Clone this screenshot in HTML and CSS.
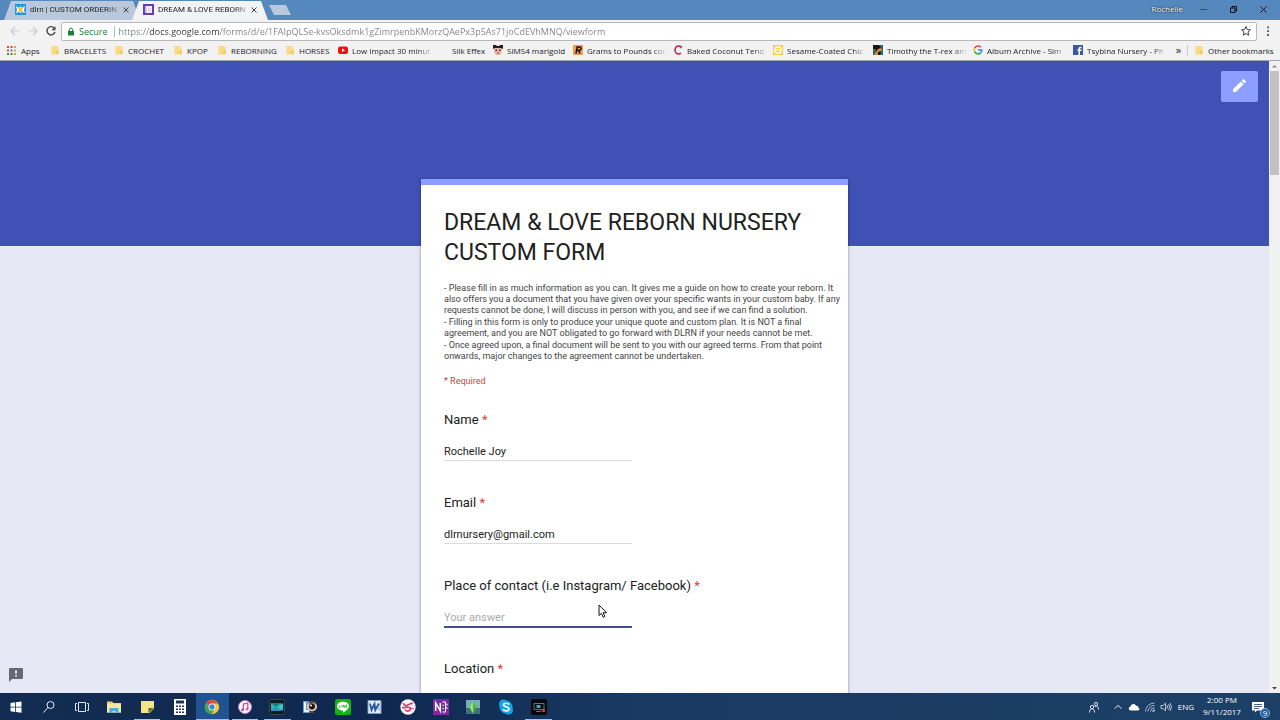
FILE: index.html
```html
<!DOCTYPE html>
<html lang="en">
<head>
  <meta charset="UTF-8">
  <meta name="viewport" content="width=device-width, initial-scale=1.0">
  <title>DREAM &amp; LOVE REBORN NURSERY CUSTOM FORM</title>
  <link rel="stylesheet" href="styles.css">
</head>
<body>

  <!-- shared icons -->
  <svg width="0" height="0" class="defs">
    <symbol id="folder" viewBox="0 0 10 11">
      <path d="M1 1h6l1 1h1v8H1z" fill="#fbdc84"/>
      <path d="M7 6h2v4H6z" fill="#f3c95c"/>
      <path d="M1 9.5h8v.8H1z" fill="#eec25a"/>
    </symbol>
    <symbol id="close" viewBox="0 0 8 8">
      <path d="M1.500 1.500l5 5m0-5l-5 5" stroke="#444"/>
    </symbol>
  </svg>

  <header class="tabstrip">
    <div class="tab">
      <svg class="fav" viewBox="0 0 11 11"><path d="M0 0h11v11H0z" fill="#1d9bd8"/><path d="M1 2l3 2 1.500-2L7 4l3-2-1 4 1 3-3-1-1.500 1L4 8 1 9l1-3z" fill="#fff"/><path d="M3 4l2.500-1L8 4 7 6l1 2H3l1-2z" fill="#f5c542"/></svg>
      <span class="tab-title">dlrn | CUSTOM ORDERIN</span>
      <button class="tab-close" aria-label="Close tab"><svg viewBox="0 0 8 8"><use href="#close"/></svg></button>
    </div>
    <div class="tab active">
      <svg class="fav" viewBox="0 0 11 11"><path d="M0 0h11v11H0z" fill="#673ab7"/><path d="M2 2h7v7H2z" fill="#f4effa"/><path d="M2 2h2v7H2zM5 4h3v1H5zm0 2h3v1H5z" fill="#d3c4ea"/></svg>
      <span class="tab-title">DREAM &amp; LOVE REBORN</span>
      <button class="tab-close" aria-label="Close tab"><svg viewBox="0 0 8 8"><use href="#close"/></svg></button>
    </div>
    <button class="new-tab" aria-label="New tab"></button>
    <div class="window-controls">
      <span class="user">Rochelle</span>
      <button aria-label="Minimize"><svg viewBox="0 0 9 9"><path d="M1 4.500h7" stroke="#2c4f78"/></svg></button>
      <button aria-label="Restore"><svg viewBox="0 0 9 9"><path d="M1.500 3h4.500v4.500H1.500zM3 3V1.500h4.500V6H6" fill="none" stroke="#111"/></svg></button>
      <button aria-label="Close"><svg viewBox="0 0 9 9"><path d="M1.500 1.500l6 6m0-6l-6 6" stroke="#111"/></svg></button>
    </div>
  </header>

  <div class="toolbar">
    <button aria-label="Back"><svg viewBox="0 0 12 12"><path d="M10.500 6H2m4-4L2 6l4 4" fill="none" stroke="#cdcdcd" stroke-width="1.200"/></svg></button>
    <button aria-label="Forward"><svg viewBox="0 0 12 12"><path d="M1.500 6H10M6 2l4 4-4 4" fill="none" stroke="#cdcdcd" stroke-width="1.200"/></svg></button>
    <button aria-label="Reload"><svg viewBox="0 0 12 12"><path d="M9.300 3.200A4.100 4.100 0 1 0 10 7" fill="none" stroke="#444" stroke-width="1.400"/><path d="M10.500 1.200v4H6.500z" fill="#444"/></svg></button>
    <div class="omnibox">
      <svg class="lock" viewBox="0 0 8 9"><path d="M1 4h6v4.500H1z" fill="#188038"/><path d="M2.300 4V2.800a1.700 1.700 0 0 1 3.400 0V4" fill="none" stroke="#188038"/></svg>
      <span class="secure">Secure</span>
      <input class="url" type="text" aria-label="Address" value="https://docs.google.com/forms/d/e/1FAIpQLSe-kvsOksdmk1gZimrpenbKMorzQAePx3p5As71joCdEVhMNQ/viewform">
      <button aria-label="Bookmark this page"><svg viewBox="0 0 12 12"><path d="M6 1.500l1.300 3 3.200.3L8 7l.8 3.200L6 8.500l-2.800 1.700L4 7 1.500 4.800l3.200-.3z" fill="none" stroke="#444"/></svg></button>
    </div>
    <button class="menu" aria-label="Menu"><svg viewBox="0 0 12 12"><path d="M5.200 1.500h1.800v1.800H5.200zm0 3.800h1.800v1.800H5.200zm0 3.800h1.800v1.800H5.200z" fill="#555"/></svg></button>
  </div>

  <nav class="bookmarks">
    <a href="#"><svg viewBox="0 0 10 10"><path d="M0 1h2v2H0zm0 3.500h2v2H0z" fill="#d9483b"/><path d="M3.500 1h2v2h-2z" fill="#d9483b"/><path d="M7 1h2v2H7zm0 3.500h2v2H7z" fill="#e2a33a"/><path d="M3.500 4.500h2v2h-2z" fill="#3b78c4"/><path d="M0 8h2v2H0zm3.500 0h2v2h-2z" fill="#3a9153"/><path d="M7 8h2v2H7z" fill="#d8a428"/></svg><span>Apps</span></a>
    <a href="#"><svg viewBox="0 0 10 11"><use href="#folder"/></svg><span>BRACELETS</span></a>
    <a href="#"><svg viewBox="0 0 10 11"><use href="#folder"/></svg><span>CROCHET</span></a>
    <a href="#"><svg viewBox="0 0 10 11"><use href="#folder"/></svg><span>KPOP</span></a>
    <a href="#"><svg viewBox="0 0 10 11"><use href="#folder"/></svg><span>REBORNING</span></a>
    <a href="#"><svg viewBox="0 0 10 11"><use href="#folder"/></svg><span>HORSES</span></a>
    <a href="#" class="cut"><svg viewBox="0 0 10 10"><rect y="1.500" width="10" height="7.500" rx="2" fill="#e11"/><path d="M4 3.500l3 1.700-3 1.700z" fill="#fff"/></svg><span>Low Impact 30 minut</span></a>
    <a href="#"><svg viewBox="0 0 10 10"></svg><span>Silk Effex</span></a>
    <a href="#"><svg viewBox="0 0 10 10"><path d="M1 3h8v4L7 10H3L1 7z" fill="#e8b9a4"/><path d="M0 0h3l1 1h2l1-1h3v4L8 3H2L0 4z" fill="#2a1b1b"/><path d="M2.500 4.500H4V6H2.500zm3.500 0h1.500V6H6z" fill="#442d2d"/><path d="M4 7.500h2v1H4z" fill="#b33"/></svg><span>SIMS4 marigold</span></a>
    <a href="#" class="cut"><svg viewBox="0 0 10 10"><path d="M0 0h10v10H0z" fill="#f0a04b"/><path d="M3.500 2h3a1.500 1.500 0 0 1 0 3.200H3.800M4.200 2L3 8.500M5.500 5.200L7 8.500" fill="none" stroke="#111" stroke-width="1.500"/></svg><span>Grams to Pounds con</span></a>
    <a href="#" class="cut"><svg viewBox="0 0 10 10"><path d="M8 3.300V1.500L7 1.200C4 .3 2 2 2 5s2 5 6 3.200" fill="none" stroke="#c2213c" stroke-width="1.500"/></svg><span>Baked Coconut Tend</span></a>
    <a href="#" class="cut"><svg viewBox="0 0 10 10"><path d="M0 0h10v10H0z" fill="#f5d33f"/><circle cx="5" cy="5" r="3.200" fill="none" stroke="#fff" stroke-width="1.400"/><path d="M3.500 5h3.500" stroke="#fff"/></svg><span>Sesame-Coated Chic</span></a>
    <a href="#" class="cut"><svg viewBox="0 0 10 10"><path d="M0 0h10v10H0z" fill="#246a78"/><path d="M1 4l3-2 4 1 1 3-2 1-1 3H1l2-3z" fill="#d98e2b"/><path d="M0 0h6l2 3-3 1-2 3-1-3H0zM5 7l3-1-1 4H5z" fill="#20150e"/></svg><span>Timothy the T-rex am</span></a>
    <a href="#" class="cut"><svg viewBox="0 0 10 10"><g fill="none" stroke-width="1.600"><path d="M8 2.300A3.800 3.800 0 0 0 1.600 3.300" stroke="#ea4335"/><path d="M1.600 3.300a3.800 3.800 0 0 0 0 3.400" stroke="#fbbc05"/><path d="M1.600 6.700A3.800 3.800 0 0 0 7.600 7.800" stroke="#34a853"/><path d="M7.600 7.800A3.700 3.700 0 0 0 8.800 5H5" stroke="#4285f4"/></g></svg><span>Album Archive - Sim</span></a>
    <a href="#" class="cut"><svg viewBox="0 0 10 10"><path d="M0 0h10v10H0z" fill="#3b5998"/><path d="M8.500 2.500H7.300c-.8 0-1.100.4-1.100 1.200V10M4.500 5.300h4" fill="none" stroke="#fff" stroke-width="1.500"/></svg><span>Tsybina Nursery - Ph</span></a>
    <button aria-label="More bookmarks">»</button>
    <a href="#" class="other"><svg viewBox="0 0 10 11"><use href="#folder"/></svg><span>Other bookmarks</span></a>
  </nav>

  <div class="viewport">
    <main class="page">
      <button class="edit" aria-label="Edit this form"><svg viewBox="0 0 16 16"><path d="M2 14v-2.800L9.800 3.400l2.800 2.800L4.800 14zM10.600 2.600l1.200-1.200c.4-.4.900-.4 1.200 0l1.600 1.600c.4.400.4.900 0 1.200l-1.200 1.200z" fill="#fff"/></svg></button>
      <form class="card">
        <h1>DREAM &amp; LOVE REBORN NURSERY CUSTOM FORM</h1>
        <div class="intro">
          <p>- Please fill in as much information as you can. It gives me a guide on how to create your reborn. It<br>also offers you a document that you have given over your specific wants in your custom baby. If any<br>requests cannot be done, I will discuss in person with you, and see if we can find a solution.</p>
          <p>- Filling in this form is only to produce your unique quote and custom plan. It is NOT a final<br>agreement, and you are NOT obligated to go forward with DLRN if your needs cannot be met.</p>
          <p>- Once agreed upon, a final document will be sent to you with our agreed terms. From that point<br>onwards, major changes to the agreement cannot be undertaken.</p>
        </div>
        <p class="required">* Required</p>
        <div class="question">
          <label for="name">Name <b>*</b></label>
          <input id="name" type="text" value="Rochelle Joy">
        </div>
        <div class="question">
          <label for="email">Email <b>*</b></label>
          <input id="email" type="text" value="dlrnursery@gmail.com">
        </div>
        <div class="question focused">
          <label for="contact">Place of contact (i.e Instagram/ Facebook) <b>*</b></label>
          <input id="contact" type="text" placeholder="Your answer">
        </div>
        <div class="question">
          <label for="location">Location <b>*</b></label>
          <input id="location" type="text">
        </div>
      </form>
      <button class="report" aria-label="Report a problem"><svg viewBox="0 0 14 14"><path d="M1 0h12q1 0 1 1v9q0 1-1 1H3l-3 3V1q0-1 1-1z" fill="#666872"/><path d="M6.200 2.500h1.600v3.300H6.200zm0 4.500h1.600v1.600H6.200z" fill="#fff"/></svg></button>
    </main>
    <div class="scrollbar">
      <svg viewBox="0 0 11 10"><path d="M3 6.500L5.500 4 8 6.500z" fill="#8a8a8a"/></svg>
      <div class="thumb"></div>
      <svg class="down" viewBox="0 0 11 10"><path d="M3 4l2.500 2.500L8 4z" fill="#444"/></svg>
    </div>
  </div>

  <svg class="cursor" viewBox="0 0 10 15"><path d="M1 1v10.500l2.400-2.200 1.800 4 1.700-.8-1.700-3.800H8.500z" fill="#fff" stroke="#111"/></svg>

  <footer class="taskbar">
    <div class="apps">
      <button aria-label="Start"><svg viewBox="0 0 16 16"><path d="M2.500 4l4.700-.7v4.400H2.500zM8 3.200l5.500-.8v5.300H8zM2.500 8.500h4.700v4.400l-4.700-.7zM8 8.500h5.500v5.300L8 13z" fill="#fff"/></svg></button>
      <button aria-label="Search"><svg viewBox="0 0 16 16"><circle cx="9.500" cy="6" r="3.500" fill="none" stroke="#e8edf4"/><path d="M7 8.500l-4.500 5" stroke="#e8edf4"/></svg></button>
      <button aria-label="Task view"><svg viewBox="0 0 16 16"><path d="M4.500 3.500h7v9h-7zM3 4.500H1.500v7H3m10-7h1.500v7H13" fill="none" stroke="#dfe6f0"/></svg></button>
      <button aria-label="File Explorer"><svg viewBox="0 0 16 16"><path d="M1 2.500h5L7.500 4H15v9.500H1z" fill="#f0d173"/><path d="M1 5h14v8.500H1z" fill="#fbe69c"/><path d="M3.500 9h9v5h-3v-2h-3v2h-3z" fill="#46aee0"/></svg></button>
      <button class="open" aria-label="Sticky Notes"><svg viewBox="0 0 16 16"><path d="M2 2h13v7.500L10.500 14H2z" fill="#f5e589"/><path d="M9.500 14V9H15z" fill="#6c6534"/></svg></button>
      <button aria-label="Calculator"><svg viewBox="0 0 16 16"><path d="M2 0h12v16H2z" fill="#fff"/><path d="M4 1.500h8v3H4zM4 6.500h2v1.500H4zm3 0h2v1.500H7zm3 0h2v1.500h-2zM4 9.500h2V11H4zm3 0h2V11H7zm3 0h2V11h-2zM4 12.500h2V14H4zm3 0h2V14H7zm3 0h2V14h-2z" fill="#1b3258"/></svg></button>
      <button class="open current" aria-label="Chrome"><svg viewBox="0 0 16 16"><circle cx="8" cy="8" r="7.200" fill="#f6c832"/><path d="M8 8L1.800 4.400A7.200 7.200 0 0 1 14.200 4.500H8z" fill="#dd4b3e"/><path d="M1.800 4.400A7.200 7.200 0 0 0 7.500 15.200L11 9.800 8 8z" fill="#3ba55a"/><circle cx="8" cy="8" r="3.500" fill="#fff"/><circle cx="8" cy="8" r="2.700" fill="#4285d6"/></svg></button>
      <button class="open" aria-label="iTunes"><svg viewBox="0 0 16 16"><circle cx="8" cy="8" r="6.500" fill="#fff" stroke="#b77bd0"/><path d="M6.300 11V5l4.500-1v6" fill="none" stroke="#d6489a" stroke-width="1.300"/><circle cx="5.500" cy="11" r="1.400" fill="#8d5bd1"/><circle cx="10" cy="10.200" r="1.400" fill="#e0559b"/></svg></button>
      <button class="open" aria-label="Video editor"><svg viewBox="0 0 16 16"><rect x=".5" y=".5" width="15" height="15" rx="2" fill="#0d1c20" stroke="#38474c"/><path d="M2 4h10v8H2z" fill="#27b9a6"/><path d="M2 4h10L7 8z" fill="#1b7f86"/><path d="M2 12l5-4 5 4z" fill="#2d8fd0"/><path d="M9 8l5-4v8z" fill="#38c9d8"/></svg></button>
      <button aria-label="Photo tool"><svg viewBox="0 0 16 16"><path d="M1 2h6v10l3 2H1z" fill="#6c9bdc"/><path d="M2 3h2v8h3v2H2z" fill="#e9f2fb"/><circle cx="10" cy="7.500" r="5" fill="#e4c8a0"/><circle cx="10" cy="7.500" r="3" fill="#15191f"/><path d="M6 4l4-2 4 1 1 3-3-2-3 1zM10 12l3 2H7z" fill="#5c4736"/><circle cx="9" cy="6.500" r="1" fill="#fff"/></svg></button>
      <button aria-label="LINE"><svg viewBox="0 0 16 16"><rect width="16" height="16" rx="2.500" fill="#12b312"/><path d="M8 2.800c3.500 0 6 2 6 4.500 0 2.300-3 4.800-6 6.500v-2.200c-3.500 0-6-1.900-6-4.300s2.500-4.500 6-4.500z" fill="#fff"/><path d="M4.300 6v2.500h1.300M7 6v2.500M8.200 8.500V6l1.500 2.500V6M12.200 6H11v2.500h1.200M11 7.200h1" fill="none" stroke="#12b312" stroke-width=".7"/></svg></button>
      <button aria-label="Word"><svg viewBox="0 0 16 16"><path d="M1 1.500h13v13H1z" fill="#e7eef9" stroke="#7c9bd0"/><path d="M3 4.500l1.500 6.500 3-6 .8 6L12 4.500" fill="none" stroke="#2a569f" stroke-width="1.900"/><path d="M11 9h2m-2 2h2" stroke="#7c9bd0"/></svg></button>
      <button aria-label="Paint tool"><svg viewBox="0 0 16 16"><circle cx="8" cy="8" r="7.700" fill="#f9f3f6"/><path d="M3 4c1 2.500 3 3 5 2s3-2 5-1.500M2 8.500c3 .5 5-1 7.500 0 1.500.6 1 3-1 3.500s-3-.5-3.500-1.500" fill="none" stroke="#cf3f73" stroke-width="1.600"/><path d="M10 8c1 1.500 2.500 2 4 1.500" fill="none" stroke="#cf3f73"/></svg></button>
      <button aria-label="OneNote"><svg viewBox="0 0 16 16"><path d="M0 0h16v16H0z" fill="#7c2aa0"/><path d="M2.700 12V4l4.600 8V4" fill="none" stroke="#fff" stroke-width="1.500"/><path d="M9.500 3h3v10h-3M9.500 6.200h1.500M9.500 9.500h1.500M12.500 5h1.500v1.500m-1.500 2H14V10" fill="none" stroke="#fff"/></svg></button>
      <button aria-label="The Sims"><svg viewBox="0 0 16 16"><path d="M1 1h14v14H1z" fill="#76aeb5"/><path d="M1 9h14v6H1z" fill="#3d7180"/><path d="M8 2l3.500 6L8 14.500 4.500 8z" fill="#4bb83d"/><path d="M8 2v12.500L4.500 8z" fill="#9be073"/></svg></button>
      <button aria-label="Skype"><svg viewBox="0 0 16 16"><circle cx="5.500" cy="5" r="4.500" fill="#13a5e8"/><circle cx="10.500" cy="11" r="4.500" fill="#13a5e8"/><circle cx="8" cy="8" r="6.500" fill="#13a5e8"/><path d="M11 5.500C10.200 4 5.500 3.500 5.500 6c0 2.200 5.500 1.300 5.500 4 0 2.500-5 2.300-6 .3" fill="none" stroke="#fff" stroke-width="1.700"/></svg></button>
      <button class="open" aria-label="Screen recorder"><svg viewBox="0 0 16 16"><rect width="16" height="16" rx="2" fill="#07090c"/><path d="M3 4.500h10v6H3zM5 12.500h5" fill="none" stroke="#3f7f8c"/><path d="M5.500 6h4v3h-4z" fill="#2cb7b0"/><circle cx="12.500" cy="11.500" r="1.800" fill="#d9372c"/></svg></button>
    </div>
    <div class="tray">
      <button aria-label="People"><svg viewBox="0 0 12 12"><circle cx="8" cy="3" r="1.700" fill="none" stroke="#dce5ef"/><circle cx="4" cy="6" r="1.700" fill="none" stroke="#dce5ef"/><path d="M1.500 11.500c0-5 5-5 5 0M6.500 6c1-1.700 4-1.500 4 2.500" fill="none" stroke="#dce5ef"/></svg></button>
      <button aria-label="Show hidden icons"><svg viewBox="0 0 12 12"><path d="M2.500 7.500L6 4.500l3.500 3" fill="none" stroke="#e8eef5"/></svg></button>
      <button aria-label="OneDrive"><svg viewBox="0 0 12 12"><path d="M3 9.500a2 2 0 0 1-.5-4C3 2.500 7 2 8 4.800c2-.3 2.700 1.200 2.400 2 1.600.5 1.400 2.700-.4 2.700z" fill="#fff"/></svg></button>
      <button aria-label="Network"><svg viewBox="0 0 12 12"><path d="M1.500 10.500A9 9 0 0 1 10.500 2M4 10.500a6.500 6.500 0 0 1 6.500-6M6.500 10.500a4 4 0 0 1 4-3.700" fill="none" stroke="#a9b7c9"/><path d="M8 10.500l2.500-2.500v2.500z" fill="#fff"/></svg></button>
      <button aria-label="Volume"><svg viewBox="0 0 12 12"><path d="M1 4.500h2l2.500-2.300v7.600L3 7.500H1zM7 4.300q1.200 1.700 0 3.400M8.600 3q2 3 0 6M10.200 2q2.500 4 0 8" fill="none" stroke="#dce5ef" stroke-width=".8"/></svg></button>
      <span class="lang">ENG</span>
      <div class="clock"><span>2:00 PM</span><span>9/11/2017</span></div>
      <button class="notes" aria-label="Notifications"><svg viewBox="0 0 12 12"><path d="M0 1h12v8.500H5L3 11.500v-2H0z" fill="#fff"/><path d="M2 3.500h8M2 5.500h8M2 7.500h5" stroke="#1c3d63" stroke-width=".8"/></svg><span class="count">9</span></button>
    </div>
  </footer>

</body>
</html>
```

FILE: styles.css
```css
* {
  box-sizing: border-box;
}
body {
  margin: 0;
  height: 100vh;
  display: flex;
  flex-direction: column;
  overflow: hidden;
  font-family: "Open Sans", "Noto Sans", sans-serif;
  font-size: 8px;
  color: #222;
}
button {
  border: none;
  background: none;
  padding: 0;
  font: inherit;
  color: inherit;
  display: flex;
  align-items: center;
  justify-content: center;
}
input {
  border: none;
  background: none;
  padding: 0;
  outline: none;
}
a {
  color: inherit;
  text-decoration: none;
}
svg {
  display: block;
  flex: none;
}
.defs {
  position: absolute;
}

/* tabs */
.tabstrip {
  flex: none;
  display: flex;
  align-items: flex-end;
  height: 20px;
  padding-left: 4px;
  background: #5588bd;
}
.tab {
  display: flex;
  align-items: center;
  width: 136px;
  height: 19px;
  margin-right: -8px;
  padding: 0 10px 2px 11px;
  background: #b9c9db;
  clip-path: polygon(7px 0, 129px 0, 136px 100%, 0 100%);
}
.tab.active {
  background: #f2f3f5;
}
.fav {
  width: 11px;
  height: 11px;
}
.tab-title {
  flex: 1;
  margin-left: 4px;
  font-family: Roboto, sans-serif;
  white-space: nowrap;
  mask-image: linear-gradient(to left, transparent, #000 16px);
}
.tab-close svg {
  width: 8px;
  height: 8px;
}
.new-tab {
  align-self: center;
  width: 22px;
  height: 10px;
  margin-left: 9px;
  background: #b9c9db;
  clip-path: polygon(0 0, 17px 0, 100% 100%, 5px 100%);
}
.window-controls {
  display: flex;
  align-items: center;
  align-self: center;
  margin-left: auto;
  padding: 0 2px 2px 0;
}
.window-controls button {
  width: 30px;
}
.window-controls svg {
  width: 9px;
  height: 9px;
}
.user {
  margin-right: 5px;
  color: #fff;
  line-height: 8px;
  text-shadow: 0 0 2px #222, 0 0 1px #222;
}

/* address bar */
.toolbar {
  flex: none;
  display: flex;
  align-items: center;
  height: 22px;
  padding: 0 6px;
  background: #f2f2f2;
}
.toolbar > button {
  width: 18px;
}
.toolbar button svg {
  width: 12px;
  height: 12px;
}
.toolbar > .menu {
  width: 12px;
  margin-left: 5px;
}
.omnibox {
  flex: 1;
  display: flex;
  align-items: center;
  height: 19px;
  margin-left: 1px;
  padding: 0 4px 0 5px;
  border: 1px solid #b8b8b8;
  border-radius: 2px;
  background: #fff;
}
.lock {
  width: 8px;
  height: 9px;
}
.secure {
  margin-left: 4px;
  padding-right: 6px;
  border-right: 1px solid #bbb;
  font-size: 9px;
  line-height: 11px;
  color: #188038;
}
.url {
  flex: 1;
  margin-left: 4px;
  font-family: "Open Sans", "Noto Sans", sans-serif;
  font-size: 9px;
  color: transparent;
  background: linear-gradient(to right, #6f8577 30px, #333 30px, #333 101px, #808080 101px);
  background-clip: text;
  -webkit-background-clip: text;
}

/* bookmarks */
.bookmarks {
  flex: none;
  display: grid;
  grid-template-columns: 43px 64px 59px 44px 68px 53px 100px 55px 80px 100px 100px 100px 100px 100px 97px 17px 1fr;
  align-items: center;
  height: 19px;
  padding: 0 0 2px 7px;
  border-bottom: 1px solid #a5a5ad;
  background: #f2f2f2;
}
.bookmarks a {
  display: flex;
  align-items: center;
  gap: 4px;
  white-space: nowrap;
}
.bookmarks svg {
  width: 10px;
  height: 10px;
}
.bookmarks .cut span {
  width: 80px;
  overflow: hidden;
  mask-image: linear-gradient(to left, transparent, #000 14px);
}
.bookmarks button {
  font-size: 11px;
  line-height: 10px;
}
.bookmarks .other {
  padding-left: 6px;
  border-left: 1px solid #ccc;
}

/* form page */
.viewport {
  flex: 1;
  display: flex;
  min-height: 0;
}
.page {
  flex: 1;
  position: relative;
  overflow: hidden;
  padding-top: 118px;
  background: linear-gradient(#3f51b5 185px, #e6e8f5 185px);
  font-family: Roboto, sans-serif;
}
.edit {
  position: absolute;
  top: 10px;
  right: 11px;
  width: 37px;
  height: 31px;
  padding: 0 2px 2px 0;
  border-radius: 2px;
  background: #8c9eff;
}
.edit svg {
  width: 16px;
  height: 16px;
}
.report {
  position: absolute;
  left: 9px;
  bottom: 11px;
}
.report svg {
  width: 14px;
  height: 14px;
}
.card {
  width: 100%;
  max-width: 427px;
  margin: 0 auto;
  padding: 23px 22px 40px 23px;
  border-top: 6px solid #8c9eff;
  background: #fff;
  box-shadow: 0 1px 3px rgba(0, 0, 0, 0.4);
}
h1 {
  margin: 0 0 15px;
  font-size: 23px;
  line-height: 30px;
  font-weight: 400;
  color: #212121;
}
.intro {
  font-size: 9px;
  line-height: 11px;
  color: #444;
  white-space: nowrap;
}
.intro p {
  margin: 0 0 1px;
}
.required {
  margin: 13px 0 23px;
  font-size: 9px;
  line-height: 12px;
  color: #c5453c;
}
.question {
  display: flex;
  flex-direction: column;
  gap: 12px;
  margin-bottom: 32px;
}
.question label {
  font-size: 13px;
  line-height: 20px;
  color: #212121;
}
.question b {
  font-weight: 400;
  color: #d0453c;
}
.question input {
  width: 188px;
  height: 19px;
  border-bottom: 1px solid #dcdcdc;
  font-family: Roboto, sans-serif;
  font-size: 11px;
  color: #222;
}
.question input::placeholder {
  color: #aaa;
}
.question.focused input {
  border-bottom-color: #3f4f8f;
  box-shadow: 0 1px #3f4f8f;
}

.scrollbar {
  display: flex;
  flex-direction: column;
  width: 11px;
  background: #f1f1f1;
}
.scrollbar svg {
  width: 11px;
  height: 10px;
}
.thumb {
  height: 104px;
  margin: 0 1px;
  background: #c1c1c1;
}
.down {
  margin-top: auto;
}
.cursor {
  position: absolute;
  left: 598px;
  top: 604px;
  width: 10px;
  height: 15px;
}

/* taskbar */
.taskbar {
  flex: none;
  display: flex;
  justify-content: space-between;
  height: 27px;
  background: linear-gradient(to right, #132d52, #0f2850 30%, #183a63 50%, #1d4066);
  color: #fff;
}
.apps {
  display: grid;
  grid-template-columns: repeat(17, 1fr);
  width: 555px;
}
.apps button {
  padding-top: 2px;
  border-bottom: 1px solid transparent;
}
.apps svg {
  width: 16px;
  height: 16px;
}
.apps .open {
  margin: 0 3px;
  border-bottom-color: #a3c4ea;
}
.apps .current {
  margin: 0;
  background: #215291;
}
.tray {
  display: flex;
  align-items: center;
  padding-right: 14px;
}
.tray svg {
  width: 12px;
  height: 12px;
}
.tray button {
  width: 16px;
}
.tray button:first-child {
  margin-right: 8px;
}
.lang {
  margin-left: 4px;
}
.clock {
  display: flex;
  flex-direction: column;
  align-items: center;
  width: 56px;
  padding-bottom: 1px;
  line-height: 12px;
}
.tray .notes {
  position: relative;
}
.count {
  position: absolute;
  right: -4px;
  bottom: -5px;
  width: 10px;
  height: 10px;
  border: 1px solid #8fb3dd;
  border-radius: 50%;
  background: #1d5a9e;
  line-height: 8px;
}
```
